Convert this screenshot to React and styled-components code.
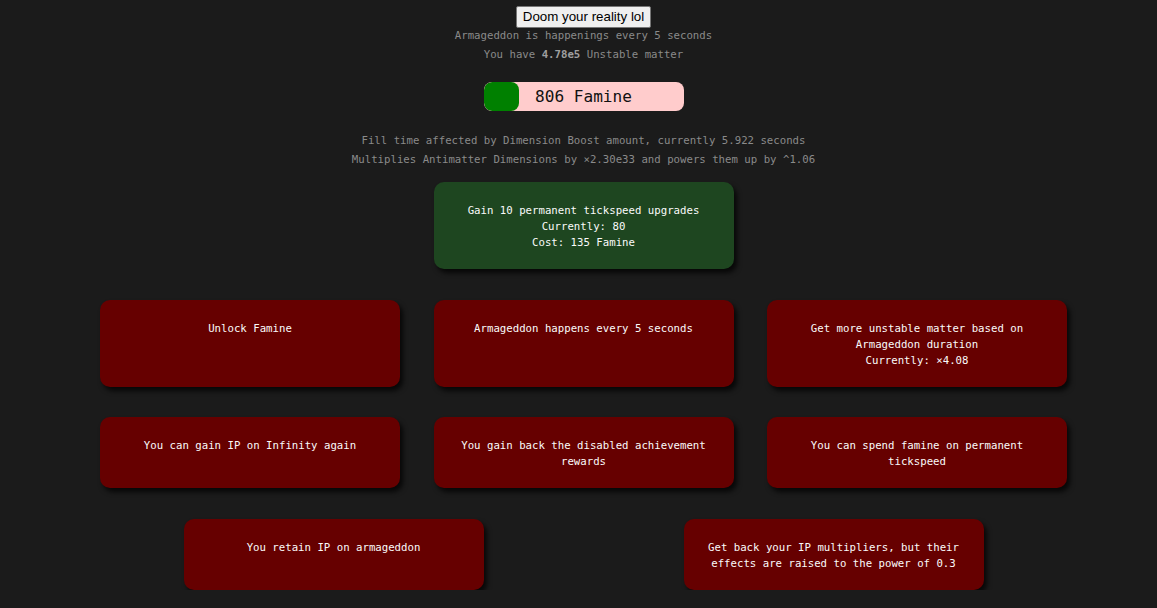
import styled, { createGlobalStyle } from "styled-components";

const GlobalStyle = createGlobalStyle`
    html, body {
        margin:0;
        background:#1b1b1b;
    }
`

const Page = styled.div`
    display:flex;
    flex-direction:column;
    align-items:center;
    margin-left:10px;
    padding-top:6px;
    font-family:"DejaVu Sans Mono", "Liberation Mono", monospace;
    font-size:10.7px;
`

const DoomButton = styled.button`
    font-family:"Liberation Sans", Arial, sans-serif;
    font-size:13.33px;
    color:black;
    background:#efefef;
    border:1px solid #767676;
    border-radius:2px;
    padding:2px 6px;
    height:22px;
    line-height:16px;
`

const InfoLine = styled.div`
    color:#8a8a8a;
    line-height:19px;
    text-align:center;
    b { color:#a0a0a0; }
`

const InfoBlock = styled.div`
    display:flex;
    flex-direction:column;
    align-items:center;
    margin-top:${p => p.$top || 0}px;
`

const Bar = styled.div`
    position:relative;
    width:200px;
    height:29px;
    margin-top:18px;
    background:#ffcccc;
    border-radius:8px;
    overflow:hidden;
    display:flex;
    align-items:center;
    justify-content:center;
`

const BarFill = styled.div`
    position:absolute;
    left:0;
    top:0;
    bottom:0;
    background:#008000;
    border-radius:8px;
`

const BarLabel = styled.span`
    position:relative;
    font-size:16.1px;
    color:#111;
`

const Row = styled.div`
    display:flex;
    justify-content:center;
    align-items:stretch;
    gap:${p => p.$gap || 34}px;
    margin-top:${p => p.$top || 30.5}px;
`

const Card = styled.div`
    width:300px;
    box-sizing:border-box;
    padding:21px 20px 18px;
    background:${p => (p.$bought ? "#1e4620" : "#660000")};
    color:#fafafa;
    border-radius:10px;
    box-shadow:3px 4px 5px rgba(0,0,0,0.75);
    text-align:center;
    line-height:16px;
`

const rows = [
    {
        gap: 33.5,
        cards: [
            ["Unlock Famine"],
            ["Armageddon happens every 5 seconds"],
            ["Get more unstable matter based on Armageddon duration", "Currently: ×4.08"],
        ],
    },
    {
        gap: 33.5,
        cards: [
            ["You can gain IP on Infinity again"],
            ["You gain back the disabled achievement rewards"],
            ["You can spend famine on permanent tickspeed"],
        ],
    },
    {
        gap: 200,
        cards: [
            ["You retain IP on armageddon"],
            ["Get back your IP multipliers, but their effects are raised to the power of 0.3"],
        ],
    },
]

export default function App() {
    return (
        <>
            <GlobalStyle />
            <Page>
                <DoomButton>Doom your reality lol</DoomButton>
                <InfoBlock $top={-2}>
                    <InfoLine>Armageddon is happenings every 5 seconds</InfoLine>
                    <InfoLine>You have <b>4.78e5</b> Unstable matter</InfoLine>
                </InfoBlock>
                <Bar>
                    <BarFill style={{ width: "35px" }} />
                    <BarLabel>806 Famine</BarLabel>
                </Bar>
                <InfoBlock $top={20}>
                    <InfoLine>Fill time affected by Dimension Boost amount, currently 5.922 seconds</InfoLine>
                    <InfoLine>Multiplies Antimatter Dimensions by ×2.30e33 and powers them up by ^1.06</InfoLine>
                </InfoBlock>
                <Row $top={13}>
                    <Card $bought>
                        Gain 10 permanent tickspeed upgrades
                        <br />
                        Currently: 80
                        <br />
                        Cost: 135 Famine
                    </Card>
                </Row>
                {rows.map((row, i) => (
                    <Row key={i} $gap={row.gap}>
                        {row.cards.map((lines, j) => (
                            <Card key={j}>
                                {lines.map((l, k) => (
                                    <div key={k}>{l}</div>
                                ))}
                            </Card>
                        ))}
                    </Row>
                ))}
            </Page>
        </>
    )
}
